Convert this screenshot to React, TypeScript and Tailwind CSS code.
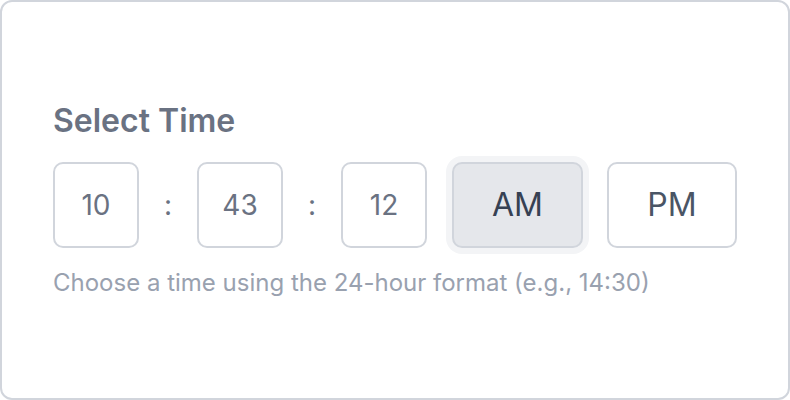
import React, { useState } from "react";

const font = { fontFamily: "Inter, 'Liberation Sans', sans-serif" };

const Field = ({ value }: { value: string }) => (
  <div className="flex h-[86px] w-[86px] items-center justify-center rounded-[10px] border-2 border-gray-300 bg-white text-[28px] text-gray-500">
    {value}
  </div>
);

const Colon = () => <span className="w-[10px] text-center text-[28px] text-gray-500">:</span>;

export default function App() {
  const [period, setPeriod] = useState<"AM" | "PM">("AM");

  return (
    <div className="h-[400px] w-[790px] bg-white" style={font}>
      <div className="flex h-full w-full flex-col justify-center rounded-xl border-2 border-gray-300 px-[51px]">
        <h2 className="text-[32px] font-semibold leading-[40px] text-gray-500">Select Time</h2>
        <div className="mt-[21px] flex items-center gap-6">
          <Field value="10" />
          <Colon />
          <Field value="43" />
          <Colon />
          <Field value="12" />
          {(["AM", "PM"] as const).map((p) => (
            <button
              key={p}
              onClick={() => setPeriod(p)}
              className={
                p === period
                  ? "ml-[1px] flex h-[86px] w-[131px] items-center justify-center rounded-[10px] border-2 border-gray-300 bg-gray-200 text-[32px] text-gray-700 ring-[6px] ring-gray-100"
                  : "flex h-[86px] w-[130px] items-center justify-center rounded-[10px] border-2 border-gray-300 bg-white text-[32px] text-gray-600"
              }
            >
              {p}
            </button>
          ))}
        </div>
        <p className="mt-[19px] text-[24px] leading-[32px] text-gray-400">
          Choose a time using the 24-hour format (e.g., 14:30)
        </p>
      </div>
    </div>
  );
}
